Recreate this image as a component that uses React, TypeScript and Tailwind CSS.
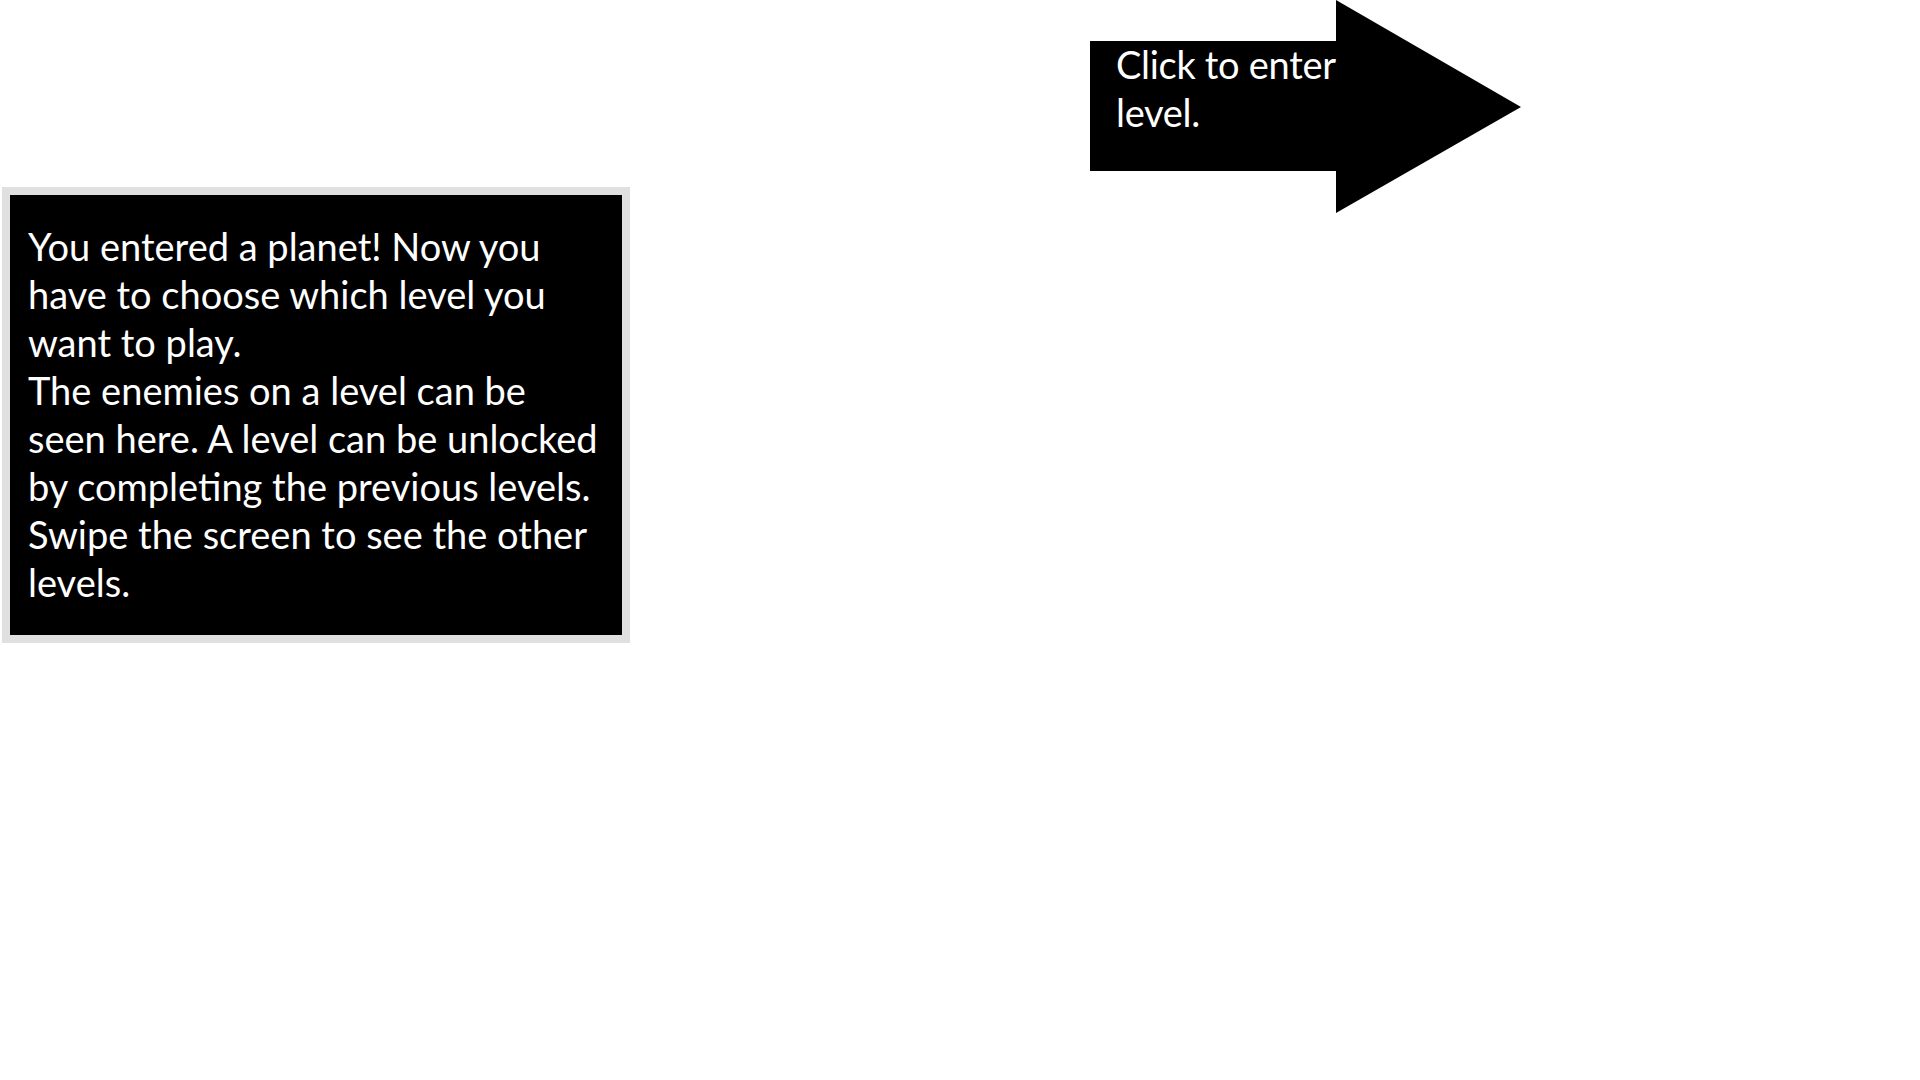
const boxLines = [
  "You entered a planet! Now you",
  "have to choose which level you",
  "want to play.",
  "The enemies on a level can be",
  "seen here. A level can be unlocked",
  "by completing the previous levels.",
  "Swipe the screen to see the other",
  "levels.",
];

const EnterArrow = () => (
  <div className="relative ml-[460px] h-[213px] w-[431px] shrink-0">
    <svg
      className="absolute inset-0"
      width="431"
      height="213"
      viewBox="0 0 431 213"
    >
      <polygon points="0,41 246,41 246,0 431,107 246,213 246,171 0,171" fill="#000" />
    </svg>
    <div className="relative pl-[26px] pt-[40px] text-[38px] leading-[48px] tracking-[-0.3px] text-white">
      <p className="whitespace-nowrap">Click to enter</p>
      <p className="whitespace-nowrap">level.</p>
    </div>
  </div>
);

export default function App() {
  return (
    <div className="flex h-[1080px] w-full items-start bg-white font-['Lato',sans-serif]">
      <div className="ml-[2px] mt-[187px] h-[456px] w-[628px] shrink-0 border-8 border-[#e0e0e0] bg-black pl-[18px] pt-[27px] text-[38px] leading-[48px] text-white">
        {boxLines.map((line) => (
          <p key={line} className="whitespace-nowrap">
            {line}
          </p>
        ))}
      </div>
      <EnterArrow />
    </div>
  );
}
